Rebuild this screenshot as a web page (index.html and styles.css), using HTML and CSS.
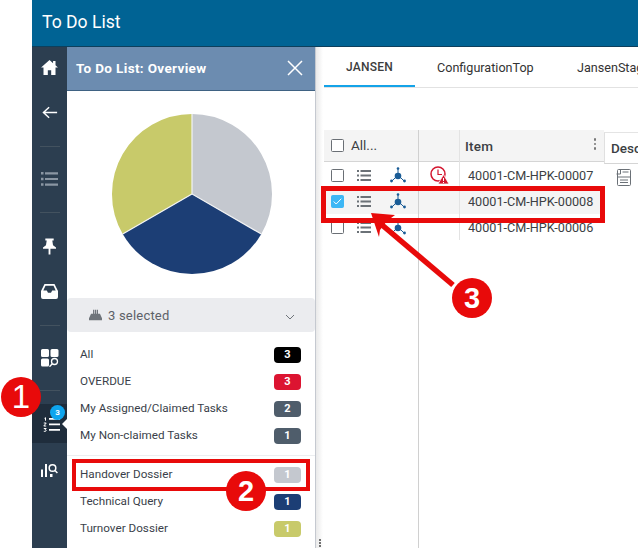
FILE: index.html
```html
<!DOCTYPE html>
<html lang="en">
<head>
<meta charset="utf-8">
<title>To Do List</title>
<link rel="stylesheet" href="styles.css">
</head>
<body>
<div class="app">
  <header class="topbar">To Do List</header>
  <div class="workspace">
    <nav class="rail">
      <div class="rail-item h40"><svg width="17" height="15" viewBox="0 0 18 16"><path fill="#fff" d="M9 0 0 8h2.600v8h4.600v-5h3.600v5h4.600V8H18l-2.600-2.300V1h-2.600v2.400z"/></svg></div>
      <div class="rail-item h50"><svg width="16" height="13" viewBox="0 0 18 14"><path fill="none" stroke="#fff" stroke-width="1.600" d="M17 7H2M8 1 1.600 7 8 13"/></svg></div>
      <div class="rail-item h18"><span class="rail-line"></span></div>
      <div class="rail-item h48"><svg width="17" height="14" viewBox="0 0 17 14"><path fill="#8a96a3" d="M0 0h2.500v2.500H0zM4 .2h13v2.200H4zM0 5.700h2.500v2.500H0zM4 5.900h13v2.200H4zM0 11.300h2.500v2.500H0zM4 11.500h13v2.200H4z"/></svg></div>
      <div class="rail-item h18"><span class="rail-line"></span></div>
      <div class="rail-item h50"><svg width="13" height="17" viewBox="0 0 14 17"><path fill="#fff" d="M2.500 0h9v2H10l.8 5.200L14 9.500V11H8v6H6v-6H0V9.500l3.200-2.300L4 2H2.500z"/></svg></div>
      <div class="rail-item h40"><svg width="17" height="15" viewBox="0 0 17 15"><path fill="#fff" fill-rule="evenodd" d="M3.500 0h10l3.500 7v6a2 2 0 0 1-2 2H2a2 2 0 0 1-2-2V7zM4.500 1.700 2.300 6.500h3.500l1.200 2.300h3l1.200-2.300h3.500l-2.200-4.800z"/></svg></div>
      <div class="rail-item h28"><span class="rail-line"></span></div>
      <div class="rail-item h38"><svg width="18" height="18" viewBox="0 0 18 18"><path fill="#fff" d="M1.500 0h5A1.500 1.500 0 0 1 8 1.500v5A1.500 1.500 0 0 1 6.500 8h-5A1.500 1.500 0 0 1 0 6.500v-5A1.500 1.500 0 0 1 1.500 0zM11 0h5a1.500 1.500 0 0 1 1.500 1.500v5A1.500 1.500 0 0 1 16 8h-5a1.500 1.500 0 0 1-1.500-1.500v-5A1.500 1.500 0 0 1 11 0zM1.500 9.500h5A1.500 1.500 0 0 1 8 11v5a1.500 1.500 0 0 1-1.500 1.500h-5A1.500 1.500 0 0 1 0 16v-5a1.500 1.500 0 0 1 1.500-1.500z"/><circle cx="13.500" cy="12.500" r="3" fill="#2c3e50" stroke="#fff" stroke-width="1.300"/><path stroke="#fff" stroke-width="1.400" d="m11.300 14.700-2.800 3"/></svg></div>
      <div class="rail-item h27"><span class="rail-line"></span></div>
      <div class="rail-item rail-active">
        <svg class="todo-ico" width="17" height="15" viewBox="0 0 17 15"><path fill="#fff" d="M6 1h11v1.800H6zM6 6.500h11v1.800H6zM6 12h11v1.800H6z"/><path fill="none" stroke="#fff" stroke-width="1" d="M1.500 1.300 2.500.7v3M.8 6h2.400L.8 9h2.400M.8 11.500h2.400l-1.200 1.200c1 0 1.200.4 1.200.8 0 .6-.6 1-2.400.8"/></svg>
        <span class="rail-badge">3</span>
        <span class="rail-caret"></span>
      </div>
      <div class="rail-item h50 analytics"><svg width="17" height="14" viewBox="0 0 17 14"><path fill="#fff" d="M0 6.500h2V14H0zM4 1h2v13H4z"/><circle cx="11.500" cy="5" r="3.300" fill="none" stroke="#fff" stroke-width="1.500"/><path stroke="#fff" stroke-width="1.500" d="m14 7.500 2.400 2.500"/><path fill="#fff" d="M9 11h2.500v3H9z"/></svg></div>
    </nav>

    <aside class="panel">
      <div class="panel-head">
        <span class="panel-title">To Do List: Overview</span>
        <svg class="panel-close" width="16" height="16" viewBox="0 0 16 16"><path stroke="#fff" stroke-width="1.500" d="m1 1 14 14M15 1 1 15"/></svg>
      </div>
      <div class="pie-wrap">
        <svg width="162" height="162" viewBox="-81 -81 162 162">
          <path fill="#c4c8cf" d="M0 0V-80A80 80 0 0 1 69.300 40z"/>
          <path fill="#1c3e75" d="M0 0 69.300 40A80 80 0 0 1 -69.300 40z"/>
          <path fill="#c8ca6a" d="M0 0-69.300 40A80 80 0 0 1 0-80z"/>
          <path fill="none" stroke="#f2f3f4" stroke-width="1.200" d="M0-80V0L69.300 40M0 0-69.300 40"/>
        </svg>
      </div>
      <div class="select">
        <svg width="13" height="12" viewBox="0 0 16 13"><path fill="#6f747a" d="M5 0h1.500v5H5zM7.300 0h1.500v5H7.300zM9.600 0h1.500v5H9.600zM2.500 5h11L16 10.500V13H0v-2.500z"/></svg>
        <span class="select-text">3 selected</span>
        <svg class="select-chevron" width="10" height="6" viewBox="0 0 10 6"><path fill="none" stroke="#6f747a" stroke-width="1" d="m1 1 4 4 4-4"/></svg>
      </div>
      <ul class="filters">
        <li class="filter"><span>All</span><b class="count c-black">3</b></li>
        <li class="filter"><span>OVERDUE</span><b class="count c-red">3</b></li>
        <li class="filter"><span>My Assigned/Claimed Tasks</span><b class="count c-slate">2</b></li>
        <li class="filter"><span>My Non-claimed Tasks</span><b class="count c-slate">1</b></li>
      </ul>
      <ul class="filters filters-types">
        <li class="filter"><span>Handover Dossier</span><b class="count c-gray">1</b></li>
        <li class="filter"><span>Technical Query</span><b class="count c-navy">1</b></li>
        <li class="filter"><span>Turnover Dossier</span><b class="count c-olive">1</b></li>
      </ul>
    </aside>

    <main class="main">
      <div class="tabs">
        <div class="tab tab-active">JANSEN</div>
        <div class="tab tab-two">ConfigurationTop</div>
        <div class="tab tab-three">JansenStage</div>
      </div>
      <div class="table">
        <div class="col col-select">
          <div class="head-cell"><span class="check"></span><span class="all-label">All...</span></div>
          <div class="row-cell"><span class="check"></span>
            <svg class="list-ico" width="14" height="11" viewBox="0 0 14 11"><path fill="#6b7177" d="M0 0h2v2H0zM3.500 0H14v2H3.500zM0 4.500h2v2H0zM3.500 4.500H14v2H3.500zM0 9h2v2H0zM3.500 9H14v2H3.500z"/></svg>
            <svg class="net-ico" width="16" height="16" viewBox="0 0 16 16"><path stroke="#1a5c96" stroke-width="1" d="M8 1v8M8 8 2 14M8 8l6 6"/><circle cx="8" cy="1.500" r="1.300" fill="#1a5c96"/><circle cx="8" cy="9" r="3.300" fill="#1a5c96"/><circle cx="1.500" cy="14" r="1.400" fill="#1a5c96"/><circle cx="14.500" cy="14" r="1.400" fill="#1a5c96"/></svg>
          </div>
          <div class="row-cell row-selected"><span class="check check-on"><svg width="9" height="7" viewBox="0 0 9 7"><path fill="none" stroke="#fff" stroke-width="1" d="m.7 3.500 2.500 2.500L8.300.7"/></svg></span>
            <svg class="list-ico" width="14" height="11" viewBox="0 0 14 11"><path fill="#6b7177" d="M0 0h2v2H0zM3.500 0H14v2H3.500zM0 4.500h2v2H0zM3.500 4.500H14v2H3.500zM0 9h2v2H0zM3.500 9H14v2H3.500z"/></svg>
            <svg class="net-ico" width="16" height="16" viewBox="0 0 16 16"><path stroke="#1a5c96" stroke-width="1" d="M8 1v8M8 8 2 14M8 8l6 6"/><circle cx="8" cy="1.500" r="1.300" fill="#1a5c96"/><circle cx="8" cy="9" r="3.300" fill="#1a5c96"/><circle cx="1.500" cy="14" r="1.400" fill="#1a5c96"/><circle cx="14.500" cy="14" r="1.400" fill="#1a5c96"/></svg>
          </div>
          <div class="row-cell"><span class="check"></span>
            <svg class="list-ico" width="14" height="11" viewBox="0 0 14 11"><path fill="#6b7177" d="M0 0h2v2H0zM3.500 0H14v2H3.500zM0 4.500h2v2H0zM3.500 4.500H14v2H3.500zM0 9h2v2H0zM3.500 9H14v2H3.500z"/></svg>
            <svg class="net-ico" width="16" height="16" viewBox="0 0 16 16"><path stroke="#1a5c96" stroke-width="1" d="M8 1v8M8 8 2 14M8 8l6 6"/><circle cx="8" cy="1.500" r="1.300" fill="#1a5c96"/><circle cx="8" cy="9" r="3.300" fill="#1a5c96"/><circle cx="1.500" cy="14" r="1.400" fill="#1a5c96"/><circle cx="14.500" cy="14" r="1.400" fill="#1a5c96"/></svg>
          </div>
        </div>
        <div class="col col-flag">
          <div class="head-cell"></div>
          <div class="row-cell flag-cell"><svg width="19" height="18" viewBox="0 0 19 18"><circle cx="8" cy="8" r="7" fill="none" stroke="#d3162f" stroke-width="1.500"/><path fill="none" stroke="#d3162f" stroke-width="1.200" d="M8 3.500V8.500h4"/><path fill="#d3162f" stroke="#fff" stroke-width=".8" d="M13.500 8.500 19 18H8z"/><path stroke="#fff" stroke-width="1" d="M13.500 12v3M13.500 16v1"/></svg></div>
          <div class="row-cell row-selected"></div>
          <div class="row-cell"></div>
        </div>
        <div class="col col-item">
          <div class="head-cell"><span class="item-label">Item</span><span class="dots"><i></i><i></i><i></i></span></div>
          <div class="row-cell item-cell">40001-CM-HPK-00007</div>
          <div class="row-cell item-cell row-selected">40001-CM-HPK-00008</div>
          <div class="row-cell item-cell">40001-CM-HPK-00006</div>
        </div>
        <div class="col col-desc">
          <div class="head-cell desc-head">Desc</div>
          <div class="row-cell doc-cell"><svg width="15" height="17" viewBox="0 0 15 17"><path fill="none" stroke="#6b7177" stroke-width="1" d="M2.500.5h11a1 1 0 0 1 1 1v14a1 1 0 0 1-1 1h-11a1 1 0 0 1-1-1v-14a1 1 0 0 1 1-1zM.5 5h4V.8M1.500 8h13M4 11h8M4 13.500h8M6.500 3h6"/></svg></div>
        </div>
      </div>
      <span class="resize-dots"><i></i><i></i><i></i></span>
    </main>
  </div>
</div>

<div class="frame frame-filter"></div>
<div class="frame frame-row"></div>
<svg class="arrow" width="90" height="80" viewBox="0 0 90 80"><path fill="none" stroke="#e80a0a" stroke-width="5.500" d="M82 72 4 6"/><path fill="#e80a0a" d="M0 0 24 2 16 8 9 17 8 24z"/></svg>
<div class="marker marker-1">1</div>
<div class="marker marker-2">2</div>
<div class="marker marker-3">3</div>
</body>
</html>
```
FILE: styles.css
```css
* { box-sizing: border-box; }
html, body { margin: 0; padding: 0; height: 100%; }
body {
  width: 638px;
  height: 548px;
  overflow: hidden;
  background: #fff;
  font-family: Roboto, "Liberation Sans", sans-serif;
  color: #333;
  position: relative;
}
svg { display: block; }
.app { margin-left: 32px; height: 548px; display: flex; flex-direction: column; }
.topbar {
  height: 47px;
  flex: none;
  background: #006394;
  border-bottom: 1px solid #0d3f5c;
  color: #fff;
  font-size: 17.6px;
  line-height: 44px;
  padding-left: 10px;
}
.workspace { flex: 1; display: flex; min-height: 0; }

/* rail */
.rail { width: 35px; flex: none; background: #2c3e50; display: flex; flex-direction: column; }
.rail-item { display: flex; align-items: center; justify-content: center; flex: none; position: relative; }
.h18 { height: 18px; } .h27 { height: 27px; } .h28 { height: 28px; } .h38 { height: 38px; }
.h40 { height: 40px; } .h48 { height: 48px; } .h50 { height: 50px; }
.rail-line { width: 20px; height: 1px; background: #43525f; }
.rail-active { height: 39px; background: #1f2d3c; }
.todo-ico { margin-top: 2px; margin-left: 3px; }
.analytics { padding-top: 4px; }
.rail-badge {
  position: absolute; left: 18px; top: 1px;
  width: 15px; height: 15px; border-radius: 50%;
  background: #0ea5ee; color: #fff;
  font-size: 8px; font-weight: 700; line-height: 15px; text-align: center;
}
.rail-caret {
  position: absolute; right: 0; top: 15px;
  border: 5px solid transparent; border-right-color: #fff; border-left-width: 0;
}

/* panel */
.panel { width: 249px; flex: none; border-right: 1px solid #c5c9d0; display: flex; flex-direction: column; }
.panel-head {
  height: 44px; flex: none;
  background: #6c8cb0;
  border-bottom: 1px solid #3f6283;
  display: flex; align-items: center; justify-content: space-between;
  padding: 0 12px 1px 9px;
  color: #fff;
}
.panel-title { font-size: 13.5px; font-weight: 700; letter-spacing: .35px; padding-bottom: 1px; }
.pie-wrap { height: 207px; flex: none; padding: 22px 0 0 44px; }
.select {
  height: 34px; flex: none;
  background: #ebecef;
  border-radius: 4px;
  display: flex; align-items: center;
  padding: 0 20px 0 22px;
  color: #5d6168;
  font-size: 13px;
}
.select-text { margin-left: 6px; letter-spacing: .2px; }
.select-chevron { margin-left: auto; margin-top: 3px; }
.filters { list-style: none; margin: 0; padding: 9px 14px 0 13px; }
.filters-types { padding-top: 5px; margin-top: 6px; border-top: 1px solid #eceef0; }
.filter {
  height: 27px;
  display: flex; align-items: center; justify-content: space-between;
  font-size: 11.7px;
  color: #3a3f4a;
}
.filter span { margin-bottom: 2px; }
.count {
  width: 27px; height: 16px; border-radius: 4px;
  color: #fff; font-size: 11px; font-weight: 700;
  line-height: 16px; text-align: center;
}
.c-black { background: #000; }
.c-red { background: #dc1431; }
.c-slate { background: #4f5d6b; }
.c-gray { background: #c4c8cf; }
.c-navy { background: #1c3e75; }
.c-olive { background: #c8ca6a; }

/* main */
.main { flex: 1; min-width: 0; position: relative; overflow: hidden; padding-left: 8px; background: linear-gradient(to right, #e9e9e9 0, #fff 7px); }
.tabs { height: 41px; display: flex; border-bottom: 1px solid #e2e2e2; font-size: 12.6px; color: #333; }
.tab { height: 40px; line-height: 41px; flex: none; }
.tab-active { width: 91px; text-align: center; font-weight: 500; font-size: 12px; letter-spacing: .2px; border-bottom: 2px solid #14a3e8; color: #3d3d3d; }
.tab-two { margin-left: 22px; width: 140px; }
.tab-three { white-space: nowrap; }
.table { display: flex; margin-top: 42px; height: 418px; }
.col { flex: none; display: flex; flex-direction: column; }
.col-select { width: 95px; border-right: 1px solid #d0d0d0; }
.col-flag { width: 41px; height: 110px; border-right: 1px solid #e3e3e3; }
.col-item { width: 144px; }
.col-desc { flex: 1; min-width: 50px; }
.head-cell {
  height: 32px; flex: none;
  background: #f4f4f4;
  border-bottom: 1px solid #d5d5d5;
  display: flex; align-items: center;
  font-size: 13.5px; color: #3c3f44; font-weight: 500;
}
.col-select .head-cell { padding-left: 7px; }
.all-label { margin-left: 7px; font-weight: 400; font-size: 13.5px; margin-top: -1px; }
.col-item .head-cell { padding: 0 8px 0 5px; justify-content: space-between; }
.item-label { letter-spacing: .2px; }
.dots { display: flex; flex-direction: column; gap: 2px; margin-top: -3px; }
.dots i { width: 2.500px; height: 2.500px; border-radius: 50%; background: #777; display: block; }
.desc-head {
  margin-top: 2px;
  border-left: 1px solid #e0e0e0;
  border-top: 1px solid #e4e4e4;
  background: #fff;
  padding-left: 6px;
}
.row-cell { height: 26px; flex: none; display: flex; align-items: center; }
.col-select .row-cell { padding-left: 7px; }
.row-selected { background: #f4f4f4; }
.check {
  width: 13px; height: 13px; flex: none;
  border: 1px solid #6a6f75; border-radius: 1.500px;
  background: #fff;
  display: flex; align-items: center; justify-content: center;
}
.check-on { background: #3db7f5; border-color: #3db7f5; }
.list-ico { margin-left: 13px; }
.net-ico { margin-left: 19px; }
.flag-cell { padding-left: 11px; }
.item-cell { padding-left: 8px; font-size: 12.65px; color: #3c3f44; }
.doc-cell { padding-left: 12px; padding-top: 1px; }
.resize-dots {
  position: absolute; left: 3px; bottom: 1px;
  display: flex; flex-direction: column; gap: 1px;
}
.resize-dots i { width: 2px; height: 2px; background: #444; border-radius: 50%; display: block; }

/* annotations */
.frame { position: absolute; border: 4px solid #e80a0a; }
.frame-filter { left: 72px; top: 459px; width: 238px; height: 32px; }
.frame-row { left: 321px; top: 186px; width: 284px; height: 37px; border-width: 5px; }
.arrow { position: absolute; left: 371px; top: 213px; }
.marker {
  position: absolute;
  width: 40px; height: 40px; border-radius: 50%;
  background: #e80a0a; color: #fff;
  font-size: 29px; font-weight: 700;
  line-height: 40px; text-align: center;
  font-family: "Liberation Sans", Arial, sans-serif;
}
.marker-1 { left: 1px; top: 377px; font-size: 33px; font-weight: 400; }
.marker-2 { left: 226px; top: 471px; }
.marker-3 { left: 452px; top: 278px; }
```
